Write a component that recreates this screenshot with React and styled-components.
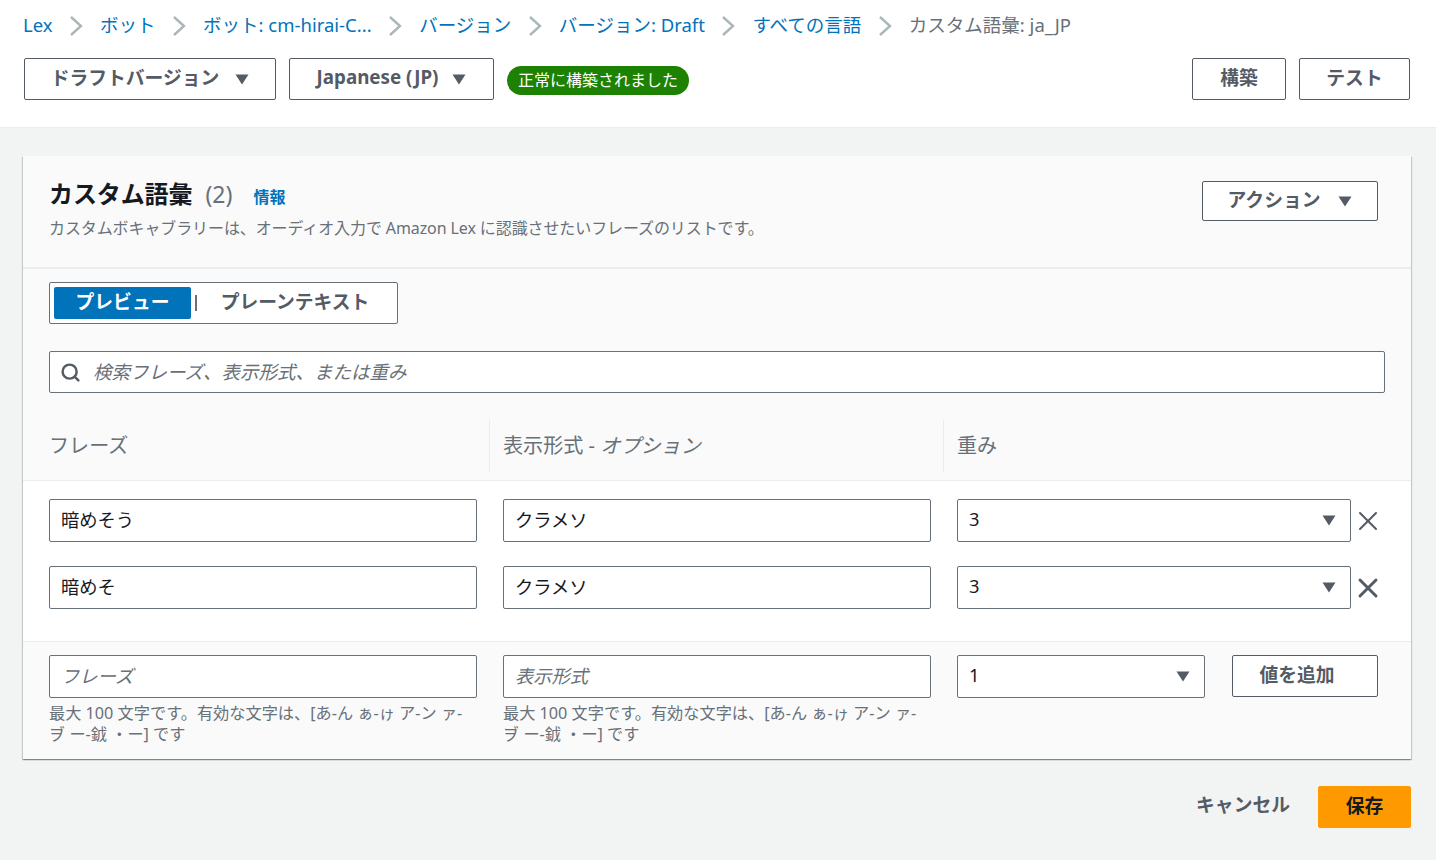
import { Fragment } from "react";
import styled, { createGlobalStyle } from "styled-components";
import { Search, X } from "lucide-react";

const GlobalStyle = createGlobalStyle`
  * { box-sizing: border-box; }
  body {
    margin: 0;
    background: #f2f3f3;
    color: #16191f;
    font-family: "Noto Sans", "Noto Sans CJK JP", sans-serif;
    font-size: 16px;
  }
`;

const Page = styled.div`
  width: 1436px;
  height: 860px;
  overflow: hidden;
`;

const Header = styled.header`
  height: 128px;
  background: #fff;
  border-bottom: 1px solid #eaeded;
  padding: 13px 26px 0 23px;
`;

const Crumbs = styled.nav`
  display: flex;
  align-items: center;
  height: 24px;
  font-size: 18.5px;
  line-height: 24px;
`;

const Crumb = styled.a`
  color: ${(p) => (p.$current ? "#687078" : "#0073bb")};
  white-space: nowrap;
`;

const CrumbArrow = styled.svg`
  width: 14px;
  height: 20px;
  margin: 1px 17px 0 16.5px;
  fill: none;
  stroke: #aab7b8;
  stroke-width: 2.4;
  flex: none;
`;

const Toolbar = styled.div`
  display: flex;
  align-items: center;
  gap: 13px;
  margin-top: 21px;
  padding-left: 1px;
`;

const Button = styled.button`
  display: inline-flex;
  align-items: center;
  justify-content: center;
  gap: ${(p) => p.$gap || 16}px;
  height: ${(p) => p.$h || 42}px;
  width: ${(p) => p.$w}px;
  flex: none;
  background: #fff;
  border: 1px solid #545b64;
  border-radius: 2px;
  color: #545b64;
  font-family: inherit;
  font-size: 18.8px;
  font-weight: 700;
  padding: 0 ${(p) => p.$shift || 0}px 4px 0;
`;

const Caret = styled.svg`
  width: 14px;
  height: 11px;
  margin-top: 4px;
  fill: #545b64;
  flex: none;
`;

const Badge = styled.span`
  display: inline-flex;
  align-items: center;
  height: 29px;
  margin-top: 2px;
  padding: 0 11px 3px;
  border-radius: 15px;
  background: #1d8102;
  color: #fff;
  font-size: 16px;
  white-space: nowrap;
`;

const Spacer = styled.div`
  flex: 1;
`;

const Card = styled.section`
  width: 1388px;
  height: 603px;
  margin: 28px 0 0 23px;
  background: #fafafa;
  box-shadow: 0 1px 1px 0 rgba(0, 28, 36, 0.3), 1px 1px 1px 0 rgba(0, 28, 36, 0.15), -1px 1px 1px 0 rgba(0, 28, 36, 0.15);
  display: flex;
  flex-direction: column;
`;

const CardHeader = styled.div`
  display: flex;
  justify-content: space-between;
  height: 113px;
  padding: 22px 33px 0 26px;
  border-bottom: 2px solid #eaeded;
`;

const ActionSlot = styled.div`
  padding-top: 3px;
`;

const TitleRow = styled.div`
  display: flex;
  align-items: baseline;
  height: 30px;
`;

const Title = styled.h2`
  margin: 0;
  font-size: 24px;
  line-height: 30px;
  font-weight: 700;
  color: #16191f;
  letter-spacing: -0.1px;
`;

const Count = styled.span`
  margin-left: 13px;
  font-size: 23px;
  color: #687078;
`;

const InfoLink = styled.a`
  margin-left: 21px;
  color: #0073bb;
  font-size: 16px;
  font-weight: 700;
`;

const Description = styled.p`
  margin: 9px 0 0;
  font-size: 16px;
  line-height: 22px;
  color: #687078;
  letter-spacing: -0.1px;
`;

const Controls = styled.div`
  padding: 13px 26px 0;
`;

const Segmented = styled.div`
  display: flex;
  align-items: center;
  width: 349px;
  height: 42px;
  padding: 0 4px;
  background: #fff;
  border: 1px solid #687078;
  border-radius: 2px;
`;

const Segment = styled.span`
  display: flex;
  align-items: center;
  justify-content: center;
  height: 32px;
  width: ${(p) => p.$w}px;
  padding-bottom: 5px;
  border-radius: 2px;
  font-size: 18.8px;
  font-weight: 700;
  background: ${(p) => (p.$active ? "#0073bb" : "transparent")};
  color: ${(p) => (p.$active ? "#fff" : "#545b64")};
`;

const SegmentDivider = styled.span`
  width: 2px;
  height: 16px;
  margin-left: 4px;
  background: #687078;
`;

const SearchBox = styled.div`
  display: flex;
  align-items: center;
  gap: 12px;
  height: 42px;
  margin-top: 27px;
  padding: 0 10px;
  background: #fff;
  border: 1px solid #687078;
  border-radius: 2px;
  color: #545b64;
`;

const SearchPlaceholder = styled.span`
  padding-bottom: 2px;
  font-size: 18.5px;
  font-style: italic;
  color: #687078;
`;

const HeadRow = styled.div`
  display: grid;
  grid-template-columns: 440px 454px 1fr;
  height: 88px;
  padding: 27px 0 0 26px;
  border-bottom: 1px solid #eaeded;
`;

const HeadCell = styled.div`
  height: 52px;
  line-height: 52px;
  font-size: 20.1px;
  color: #687078;
  padding-left: ${(p) => (p.$first ? 0 : 13)}px;
  border-left: ${(p) => (p.$first ? "none" : "1px solid #eaeded")};
`;

const Rows = styled.div`
  display: flex;
  flex-direction: column;
  gap: 24px;
  height: 161px;
  padding: 18px 26px 0;
  background: #fff;
  border-bottom: 1px solid #eaeded;
`;

const Row = styled.div`
  display: grid;
  grid-template-columns: 428px 428px 394px 34px;
  column-gap: 26px;
  align-items: center;
`;

const RemoveCell = styled.span`
  display: flex;
  margin-left: -25px;
  color: #545b64;
`;

const Field = styled.div`
  display: flex;
  align-items: center;
  justify-content: space-between;
  height: 43px;
  padding: 0 ${(p) => (p.$select ? 14 : 11)}px 4px 11px;
  background: #fff;
  border: 1px solid #687078;
  border-radius: 2px;
  font-size: 18.3px;
  color: ${(p) => (p.$placeholder ? "#687078" : "#16191f")};
  font-style: ${(p) => (p.$placeholder ? "italic" : "normal")};
`;

const AddRow = styled.div`
  display: grid;
  grid-template-columns: 428px 428px 248px 146px;
  column-gap: 26px;
  padding: 13px 26px 0;
`;

const AddButtonCell = styled.div`
  margin-left: 1px;
`;

const Hint = styled.p`
  margin: 5px 0 0;
  padding-right: 8px;
  font-size: 16.2px;
  line-height: 21px;
  color: #687078;
`;

const Footer = styled.footer`
  display: flex;
  align-items: center;
  justify-content: flex-end;
  gap: 28px;
  width: 1411px;
  margin-top: 27px;
`;

const TextButton = styled.button`
  border: none;
  background: transparent;
  padding: 0 0 6px;
  color: #545b64;
  font-family: inherit;
  font-size: 18.8px;
  font-weight: 700;
`;

const PrimaryButton = styled(Button)`
  background: #ff9900;
  border-color: #ff9900;
  color: #16191f;
`;

const caret = (
  <Caret viewBox="0 0 14 11">
    <path d="M0.5 0.5h13L7 10.5z" />
  </Caret>
);

const crumbs = ["Lex", "ボット", "ボット: cm-hirai-C...", "バージョン", "バージョン: Draft", "すべての言語"];

const vocabulary = [
  { phrase: "暗めそう", display: "クラメソ", weight: "3", stroke: 1.5 },
  { phrase: "暗めそ", display: "クラメソ", weight: "3", stroke: 2.2 },
];

const hint = "最大 100 文字です。有効な文字は、[あ-ん ぁ-ゖ ア-ン ァ-ヺ ー-龯 ・ー] です";

export default function App() {
  return (
    <Page>
      <GlobalStyle />
      <Header>
        <Crumbs>
          {crumbs.map((c) => (
            <Fragment key={c}>
              <Crumb>{c}</Crumb>
              <CrumbArrow viewBox="0 0 14 20">
                <path d="M2 1l10 9-10 9" />
              </CrumbArrow>
            </Fragment>
          ))}
          <Crumb $current>カスタム語彙: ja_JP</Crumb>
        </Crumbs>
        <Toolbar>
          <Button $w={252}>ドラフトバージョン {caret}</Button>
          <Button $w={205} $gap={14}>Japanese (JP) {caret}</Button>
          <Badge>正常に構築されました</Badge>
          <Spacer />
          <Button $w={94}>構築</Button>
          <Button $w={111}>テスト</Button>
        </Toolbar>
      </Header>
      <Card>
        <CardHeader>
          <div>
            <TitleRow>
              <Title>カスタム語彙</Title>
              <Count>(2)</Count>
              <InfoLink>情報</InfoLink>
            </TitleRow>
            <Description>カスタムボキャブラリーは、オーディオ入力で Amazon Lex に認識させたいフレーズのリストです。</Description>
          </div>
          <ActionSlot>
            <Button $w={176} $h={40} $gap={18}>アクション {caret}</Button>
          </ActionSlot>
        </CardHeader>
        <Controls>
          <Segmented>
            <Segment $active $w={137}>プレビュー</Segment>
            <SegmentDivider />
            <Segment $w={196}>プレーンテキスト</Segment>
          </Segmented>
          <SearchBox>
            <Search size={21} strokeWidth={2.8} />
            <SearchPlaceholder>検索フレーズ、表示形式、または重み</SearchPlaceholder>
          </SearchBox>
        </Controls>
        <HeadRow>
          <HeadCell $first>フレーズ</HeadCell>
          <HeadCell>表示形式 - <em>オプション</em></HeadCell>
          <HeadCell>重み</HeadCell>
        </HeadRow>
        <Rows>
          {vocabulary.map((v) => (
            <Row key={v.phrase}>
              <Field>{v.phrase}</Field>
              <Field>{v.display}</Field>
              <Field $select>{v.weight} {caret}</Field>
              <RemoveCell>
                <X size={32} strokeWidth={v.stroke} />
              </RemoveCell>
            </Row>
          ))}
        </Rows>
        <AddRow>
          <div>
            <Field $placeholder>フレーズ</Field>
            <Hint>{hint}</Hint>
          </div>
          <div>
            <Field $placeholder>表示形式</Field>
            <Hint>{hint}</Hint>
          </div>
          <Field $select>1 {caret}</Field>
          <AddButtonCell>
            <Button $w={146} $shift={16}>値を追加</Button>
          </AddButtonCell>
        </AddRow>
      </Card>
      <Footer>
        <TextButton>キャンセル</TextButton>
        <PrimaryButton $w={93}>保存</PrimaryButton>
      </Footer>
    </Page>
  );
}
